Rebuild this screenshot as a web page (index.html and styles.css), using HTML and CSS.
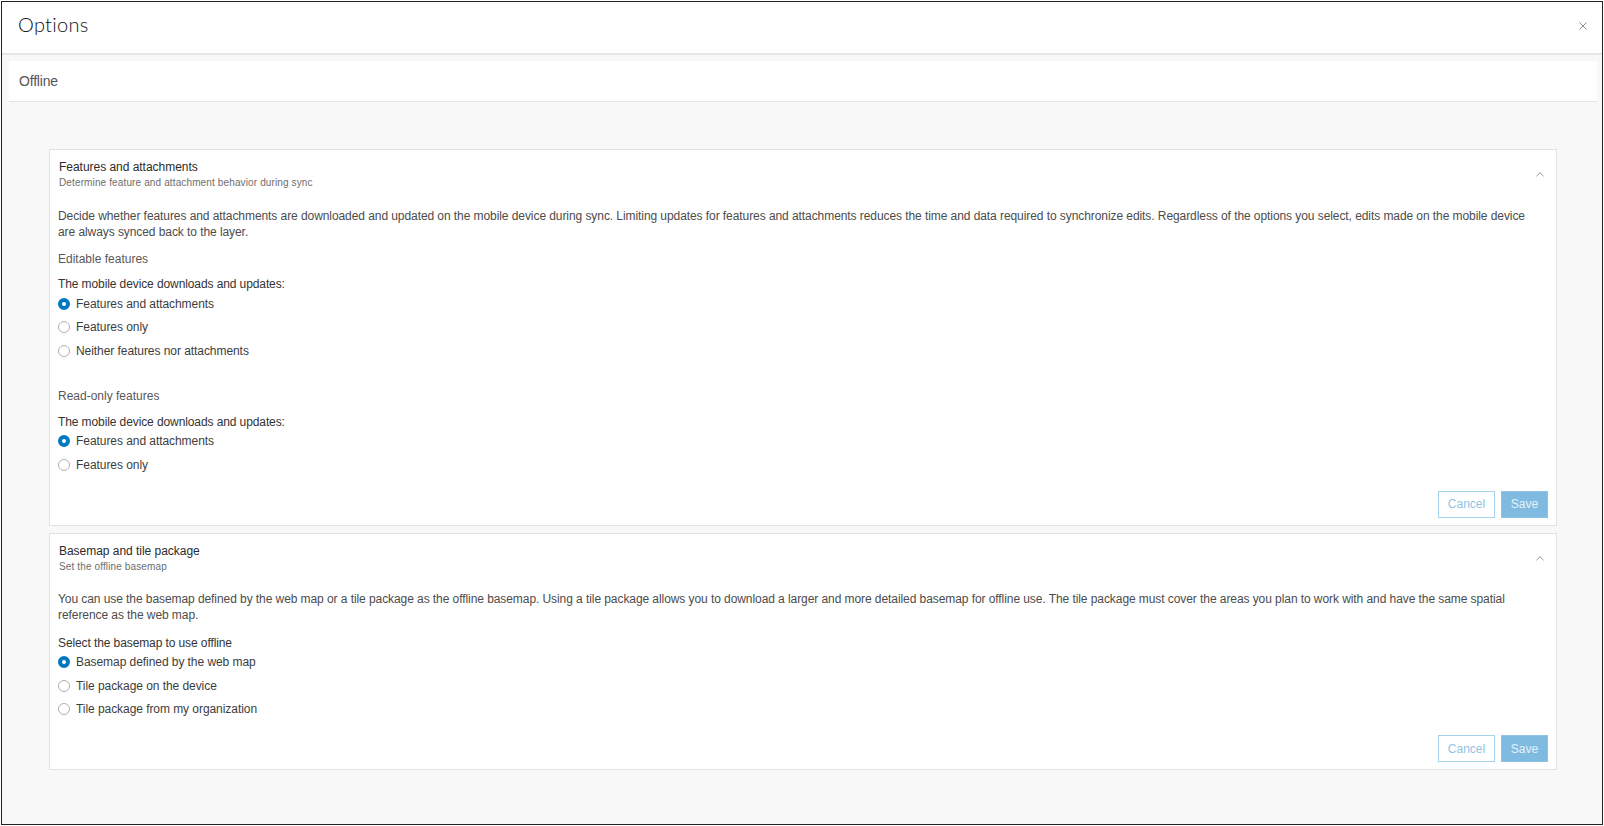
FILE: index.html
```html
<!DOCTYPE html>
<html lang="en">
<head>
<meta charset="utf-8">
<title>Options</title>
<link rel="stylesheet" href="styles.css">
</head>
<body>
<div class="frame">
  <header class="top">
    <h1 class="title">Options</h1>
    <svg class="close" viewBox="0 0 8 8" aria-hidden="true"><path d="M.5.5l7 7M7.5.5l-7 7"/></svg>
  </header>
  <main class="main">
    <div class="tab">Offline</div>
    <div class="cards">
      <section class="card card-a">
        <div class="card-head">
          <div>
            <h2 class="card-title">Features and attachments</h2>
            <p class="card-sub">Determine feature and attachment behavior during sync</p>
          </div>
          <svg class="chev" viewBox="0 0 8 5" aria-hidden="true"><path d="M.5 4.2L4 .8l3.5 3.4"/></svg>
        </div>
        <p class="desc">Decide whether features and attachments are downloaded and updated on the mobile device during sync. Limiting updates for features and attachments reduces the time and data required to synchronize edits. Regardless of the options you select, edits made on the mobile device are always synced back to the layer.</p>
        <h3 class="group">Editable features</h3>
        <p class="prompt">The mobile device downloads and updates:</p>
        <ul class="radios">
          <li class="radio"><span class="dot on"></span>Features and attachments</li>
          <li class="radio"><span class="dot"></span>Features only</li>
          <li class="radio"><span class="dot"></span>Neither features nor attachments</li>
        </ul>
        <h3 class="group group-2">Read-only features</h3>
        <p class="prompt prompt-2">The mobile device downloads and updates:</p>
        <ul class="radios">
          <li class="radio"><span class="dot on"></span>Features and attachments</li>
          <li class="radio"><span class="dot"></span>Features only</li>
        </ul>
        <div class="actions">
          <button class="btn cancel" type="button">Cancel</button>
          <button class="btn save" type="button">Save</button>
        </div>
      </section>
      <section class="card card-b">
        <div class="card-head">
          <div>
            <h2 class="card-title">Basemap and tile package</h2>
            <p class="card-sub">Set the offline basemap</p>
          </div>
          <svg class="chev" viewBox="0 0 8 5" aria-hidden="true"><path d="M.5 4.2L4 .8l3.5 3.4"/></svg>
        </div>
        <p class="desc desc-b">You can use the basemap defined by the web map or a tile package as the offline basemap. Using a tile package allows you to download a larger and more detailed basemap for offline use. The tile package must cover the areas you plan to work with and have the same spatial reference as the web map.</p>
        <p class="prompt prompt-b">Select the basemap to use offline</p>
        <ul class="radios">
          <li class="radio"><span class="dot on"></span>Basemap defined by the web map</li>
          <li class="radio"><span class="dot"></span>Tile package on the device</li>
          <li class="radio"><span class="dot"></span>Tile package from my organization</li>
        </ul>
        <div class="actions">
          <button class="btn cancel" type="button">Cancel</button>
          <button class="btn save" type="button">Save</button>
        </div>
      </section>
    </div>
  </main>
</div>
</body>
</html>
```

FILE: styles.css
```css
* { box-sizing: border-box; }
html, body { margin: 0; padding: 0; background: #fff; }
body { font-family: "Liberation Sans", Arial, sans-serif; font-size: 12px; color: #4c4c4c; }
.frame {
  width: 1602px; height: 824px; margin: 1px;
  border: 1px solid #222; display: flex; flex-direction: column; background: #f8f8f8; overflow: hidden;
}
.top {
  height: 53px; flex: none; background: #fff; border-bottom: 2px solid #e6e6e6;
  display: flex; align-items: center; justify-content: space-between; padding: 0 15px 8px 16px;
}
.title { margin: 0; font: 300 20px/1 Lato, sans-serif; color: #111; letter-spacing: .3px; }
.close { width: 8px; height: 8px; margin-top: 4px; fill: none; stroke: #808080; stroke-width: .9; }
.main { flex: 1; padding: 6px 5px 0 7px; display: flex; flex-direction: column; }
.tab {
  height: 41px; flex: none; background: #fff; border-bottom: 1px solid #e4e4e4;
  display: flex; align-items: center; padding-left: 10px; font-size: 14px; letter-spacing: -.2px; color: #555;
}
.cards { padding: 47px 40px 0 40px; display: flex; flex-direction: column; gap: 7px; }
.card { background: #fff; border: 1px solid #e2e2e2; padding: 9px 8px 7px 8px; display: flex; flex-direction: column; }
.card-a { height: 376.5px; }
.card-b { height: 237.5px; }
.card-head { display: flex; justify-content: space-between; align-items: flex-start; padding-left: 1px; }
.card-title { margin: 0; font-weight: 400; font-size: 12px; line-height: 16px; letter-spacing: -.03px; color: #2b2b2b; }
.card-sub { margin: 0; font-size: 10px; letter-spacing: .13px; line-height: 15px; color: #6e6e6e; }
.chev { width: 8px; height: 5px; margin: 13px 4px 0 0; fill: none; stroke: #888; stroke-width: .9; }
.desc { margin: 18px 0 0; line-height: 16px; width: 1480px; letter-spacing: -.073px; color: #4c4c4c; }
.desc-b { margin-top: 17px; }
.group { margin: 11px 0 0; font-weight: 400; font-size: 12px; line-height: 16px; color: #595959; }
.group-2 { margin-top: 25px; }
.prompt { margin: 9px 0 0; line-height: 16px; letter-spacing: -.1px; color: #333; }
.prompt-2 { margin-top: 10px; }
.prompt-b { margin-top: 12px; }
.radios { list-style: none; margin: 0; padding: 0; }
.radio { height: 23.5px; display: flex; align-items: center; letter-spacing: -.06px; color: #3d3d3d; }
.dot { width: 12px; height: 12px; border-radius: 50%; border: 1px solid #b0b0b0; background: #fff; margin-right: 6px; flex: none; }
.dot.on { border: 4px solid #0079c1; background: #fff; }
.actions { display: flex; justify-content: flex-end; gap: 6px; margin-top: auto; }
.btn { height: 27px; font: 12px "Liberation Sans", Arial, sans-serif; padding: 0; }
.cancel { width: 57px; background: #fff; border: 1px solid #a6d3ec; color: #8fc4e4; }
.save { width: 47px; background: #7fbbe0; border: 1px solid #8dc3e4; color: #e4f1f9; }
```
